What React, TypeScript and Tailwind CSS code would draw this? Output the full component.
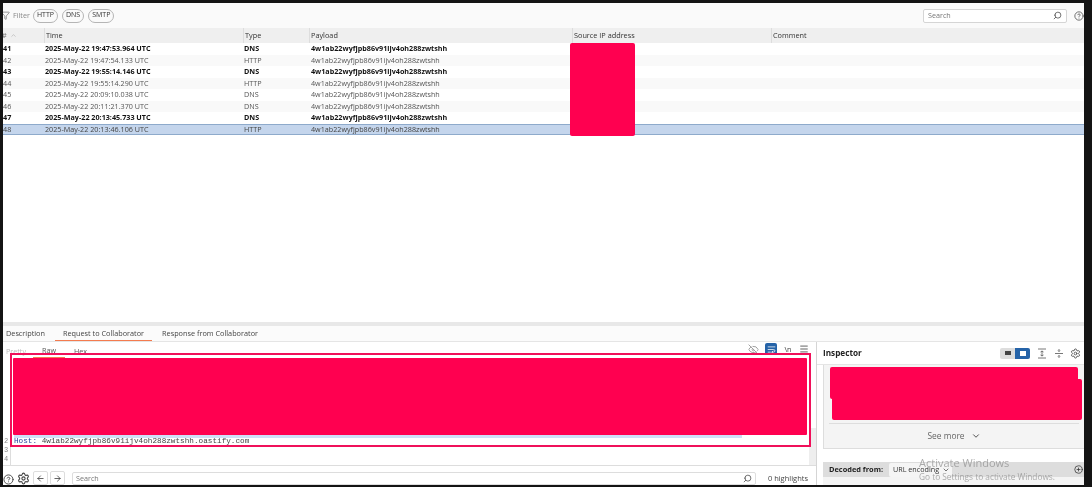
import React from 'react';
import { ChevronDown, ChevronUp, Search, CircleHelp, Settings, ArrowLeft, ArrowRight, Filter, CirclePlus, EyeOff, WrapText, Menu } from 'lucide-react';

interface Row {
  id: string;
  time: string;
  type: string;
  bold: boolean;
}

const PAYLOAD = '4w1ab22wyfjpb86v91ijv4oh288zwtshh';

const rows: Row[] = [
  { id: '141', time: '2025-May-22 19:47:53.964 UTC', type: 'DNS', bold: true },
  { id: '142', time: '2025-May-22 19:47:54.133 UTC', type: 'HTTP', bold: false },
  { id: '143', time: '2025-May-22 19:55:14.146 UTC', type: 'DNS', bold: true },
  { id: '144', time: '2025-May-22 19:55:14.290 UTC', type: 'HTTP', bold: false },
  { id: '145', time: '2025-May-22 20:09:10.038 UTC', type: 'DNS', bold: false },
  { id: '146', time: '2025-May-22 20:11:21.370 UTC', type: 'DNS', bold: false },
  { id: '147', time: '2025-May-22 20:13:45.733 UTC', type: 'DNS', bold: true },
  { id: '148', time: '2025-May-22 20:13:46.106 UTC', type: 'HTTP', bold: false },
];

const cols = 'grid grid-cols-[41px_199px_66px_263px_199px_1fr]';

const Pill = ({ label }: { label: string }) => (
  <span className="h-[14px] px-[3px] flex items-center rounded-full border border-[#b5b5b5] text-[#333] text-[7px]">{label}</span>
);

const App: React.FC = () => {
  return (
    <div className="w-[1092px] h-[487px] bg-[#141414] pt-[3px] pl-[3px] pr-[8px] pb-[2px] overflow-hidden font-['Open_Sans',sans-serif] text-[7.2px] text-[#444] blur-[0.3px]">
      <div className="relative w-full h-full bg-white flex flex-col overflow-hidden">
        {/* filter bar */}
        <div className="h-[25px] shrink-0 bg-[#fafafa] flex items-center">
          <Filter size={9} className="text-[#777] ml-[-2px] mr-[3px]" />
          <span className="text-[#888] mr-[3px]">Filter</span>
          <div className="flex gap-[4px]">
            <Pill label="HTTP" />
            <Pill label="DNS" />
            <Pill label="SMTP" />
          </div>
          <div className="ml-auto w-[144px] h-[14px] bg-white border border-[#d5d5d5] rounded-[2px] flex items-center justify-between px-[4px] text-[#777]">
            <span>Search</span>
            <Search size={9} className="text-[#444] -scale-x-100" />
          </div>
          <CircleHelp size={10} className="ml-[7px] text-[#555]" />
        </div>

        {/* table */}
        <div className={`${cols} h-[15px] shrink-0 bg-[#efefef] items-center text-[#333] text-[7.3px]`}>
          <div className="flex items-center text-[#777]">
            <span className="ml-[-1px]">#</span>
            <ChevronUp size={7} className="ml-[3px] text-[#aaa]" />
          </div>
          <div className="h-full flex items-center border-l border-[#ddd] pl-[1px]">Time</div>
          <div className="h-full flex items-center border-l border-[#ddd] pl-[1px]">Type</div>
          <div className="h-full flex items-center border-l border-[#ddd] pl-[1px]">Payload</div>
          <div className="h-full flex items-center border-l border-[#ddd] pl-[1px]">Source IP address</div>
          <div className="h-full flex items-center border-l border-[#ddd] pl-[1px]">Comment</div>
        </div>
        <div className="h-[279px] shrink-0 bg-white">
          {rows.map((r, i) => (
            <div
              key={r.id}
              className={`${cols} h-[11.5px] items-center leading-none ${
                r.id === '148'
                  ? 'bg-[#c4d5ec] border-y border-[#8eaacb] text-[#444]'
                  : i % 2 === 1
                    ? 'bg-[#f9f9f9] text-[#555]'
                    : 'bg-white text-[#555]'
              } ${r.bold ? 'font-bold !text-[#111]' : ''}`}
            >
              <div className="overflow-hidden">
                <span className="block ml-[-4px]">{r.id}</span>
              </div>
              <div className="pl-[1px]">{r.time}</div>
              <div className="pl-[1px]">{r.type}</div>
              <div className="pl-[2px]">{PAYLOAD}</div>
              <div />
              <div />
            </div>
          ))}
        </div>

        {/* divider */}
        <div className="h-[4px] shrink-0 bg-[#e8e8e8]" />

        {/* tabs */}
        <div className="h-[16px] shrink-0 flex items-stretch text-[7.3px] text-[#444] bg-[#fbfbfb] border-b border-[#e5e5e5]">
          <span className="flex items-center ml-[3px] mr-[10px]">Description</span>
          <span className="flex items-center px-[8px] border-b border-[#f47b4f]">Request to Collaborator</span>
          <span className="flex items-center ml-[10px]">Response from Collaborator</span>
        </div>

        {/* bottom split */}
        <div className="flex-1 flex min-h-0">
          <div className="w-[814px] shrink-0 flex flex-col border-r border-[#d5d5d5]">
            <div className="h-[16px] shrink-0 flex items-center text-[#555] pr-[7px]">
              <span className="ml-[3px] text-[#bbb] pt-[2px]">Pretty</span>
              <span className="ml-[7px] px-[9px] h-full flex items-center pt-[2px] border-b border-[#f47b4f]">Raw</span>
              <span className="ml-[9px] pt-[2px]">Hex</span>
              <div className="ml-auto flex items-center gap-[6px] pb-[2px]">
                <EyeOff size={11} className="text-[#999]" />
                <span className="w-[12px] h-[12px] rounded-[2px] bg-[#2563a8] flex items-center justify-center">
                  <WrapText size={9} className="text-white" />
                </span>
                <span className="text-[#444] w-[10px] text-center">\n</span>
                <Menu size={10} className="text-[#444]" />
              </div>
            </div>
            <div className="flex-1 flex font-['Liberation_Mono',monospace] text-[7.7px] leading-[9px] text-[#444] min-h-0">
              <div className="w-[7px] shrink-0 pt-[79px] pl-[1px] text-[#888] text-[7px]">
                <div className="h-[9px] overflow-hidden">2</div>
                <div className="h-[9px] overflow-hidden">3</div>
                <div className="h-[9px] overflow-hidden">4</div>
              </div>
              <div className="flex-1 relative border-l border-[#ddd]">
                <div className="absolute left-[3px] top-[76px] w-[728px] h-[4px] bg-[#cfe0f7]" />
                <span className="absolute right-[33px] top-[70px]">P/1.1</span>
                <div className="relative pt-[79px] pl-[3px]">
                  <span className="text-[#2a3f9e]">Host:</span> {PAYLOAD}.oastify.com
                </div>
                <div className="absolute right-0 top-[70px] bottom-0 w-[7px] bg-[#eee]" />
              </div>
            </div>
            <div className="h-[20px] shrink-0 flex items-end border-t border-[#ddd] pr-[8px]">
              <CircleHelp size={11} className="text-[#444]" />
              <Settings size={13} className="ml-[3px] text-[#444]" />
              <span className="ml-[3px] w-[15px] h-[14px] border border-[#ddd] rounded-[2px] flex items-center justify-center">
                <ArrowLeft size={9} className="text-[#333]" />
              </span>
              <span className="ml-[2px] w-[15px] h-[14px] border border-[#ddd] rounded-[2px] flex items-center justify-center">
                <ArrowRight size={9} className="text-[#333]" />
              </span>
              <div className="ml-[7px] flex-1 h-[13px] border border-[#ddd] rounded-[2px] flex items-center justify-between px-[3px] text-[#777]">
                <span>Search</span>
                <Search size={9} className="text-[#444] -scale-x-100" />
              </div>
              <span className="ml-[12px] text-[7.5px] leading-[13px] text-[#444]">0 highlights</span>
            </div>
          </div>

          <div className="flex-1 flex flex-col bg-white min-w-0">
            <div className="h-[23px] shrink-0 bg-white flex items-center pl-[6px] pr-[3px] border-b border-[#e5e5e5]">
              <span className="font-bold text-[#222] text-[8.2px]">Inspector</span>
              <div className="ml-auto flex items-center">
                <span className="w-[15px] h-[11px] bg-[#ddd] rounded-l-[2px] flex items-center justify-center">
                  <span className="w-[6px] h-[4px] bg-[#444]" />
                </span>
                <span className="w-[15px] h-[11px] bg-[#2563a8] rounded-r-[2px] flex items-center justify-center">
                  <span className="w-[6px] h-[5px] bg-white" />
                </span>
                <svg width="10" height="11" viewBox="0 0 10 11" className="ml-[7px] text-[#555]" fill="none" stroke="currentColor" strokeWidth="0.8">
                  <path d="M1 1h8M1 10h8M5 3v5M3.5 4L5 3l1.500 1M3.500 7L5 8l1.500-1" />
                </svg>
                <svg width="10" height="11" viewBox="0 0 10 11" className="ml-[7px] text-[#555]" fill="none" stroke="currentColor" strokeWidth="0.8">
                  <path d="M1 5.500h8M5 1v2.500M5 7.500V10M4 2.500L5 3.500l1-1M4 8.500L5 7.500l1 1" />
                </svg>
                <Settings size={11} className="ml-[6px] text-[#555]" />
              </div>
            </div>
            <div className="flex-1 flex flex-col pl-[6px] min-h-0">
              <div className="h-[84px] shrink-0 flex flex-col bg-[#f4f4f4] border-l border-b border-[#ddd]">
                <div className="h-[59px] shrink-0 mx-[5px] border-b border-[#ddd]" />
                <div className="flex-1 flex items-center justify-center gap-[6px] text-[8.4px] text-[#666]">
                  <span>See more</span>
                  <ChevronDown size={10} className="text-[#333]" />
                </div>
              </div>
              <div className="h-[13px] shrink-0" />
              <div className="h-[15px] shrink-0 bg-[#ddd] flex items-center pl-[6px] pr-[1px]">
                <span className="font-bold text-[#222] text-[7.4px] whitespace-nowrap">Decoded from:</span>
                <span className="ml-[6px] w-[63px] h-[14px] pl-[4px] bg-[#f5f5f5] rounded-[2px] flex items-center gap-[3px] text-[#333] text-[7.2px] whitespace-nowrap">
                  URL encoding
                  <ChevronDown size={8} />
                </span>
                <CirclePlus size={9} className="ml-auto text-[#333]" />
              </div>
              <div className="flex-1 bg-[#f4f4f4]" />
            </div>
          </div>
        </div>

        {/* redaction marks */}
        <div className="absolute left-[567px] top-[40px] w-[65px] h-[93px] bg-[#ff0050] rounded-[2px]" />
        <div className="absolute left-[7px] top-[350px] w-[801px] h-[94px] border-2 border-[#f0105a]" />
        <div className="absolute left-[10px] top-[355px] w-[794px] h-[77px] bg-[#ff0050] rounded-[1px]" />
        <div className="absolute left-[827px] top-[364px] w-[248px] h-[32px] bg-[#ff0050] rounded-[2px]" />
        <div className="absolute left-[829px] top-[376px] w-[250px] h-[41px] bg-[#ff0050] rounded-[2px]" />

        {/* windows watermark */}
        <div className="absolute left-[916px] top-[454px] text-[#8a8a8a]/70 leading-none">
          <div className="text-[11px]">Activate Windows</div>
          <div className="text-[8.3px] mt-[5px]">Go to Settings to activate Windows.</div>
        </div>
      </div>
    </div>
  );
};

export default App;
